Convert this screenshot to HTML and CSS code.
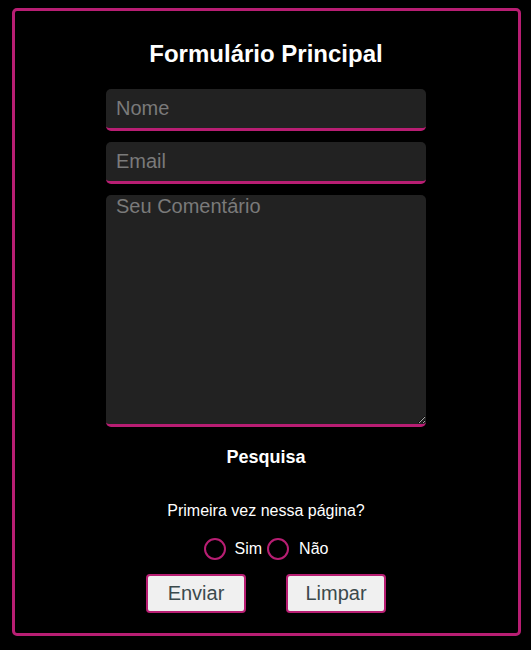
FILE: index.html
```html
<!DOCTYPE html>
<html lang="pt-BR">
<head>
    <meta charset="UTF-8">
    <meta name="viewport" content="width=device-width, initial-scale=1.0">
    <title>Formulário Principal</title>
    <link rel="stylesheet" href="styles.css">
</head>
<body>
    <form class="form-box" onsubmit="return false">
        <h1 class="title">Formulário Principal</h1>
        <input type="text" class="field" placeholder="Nome">
        <input type="email" class="field" placeholder="Email">
        <textarea class="field comment" placeholder="Seu Comentário"></textarea>
        <h2 class="subtitle">Pesquisa</h2>
        <p class="question">Primeira vez nessa página?</p>
        <div class="radio-row">
            <input type="radio" name="primeira" id="sim" class="radio">
            <label for="sim" class="radio-label">Sim</label>
            <input type="radio" name="primeira" id="nao" class="radio">
            <label for="nao" class="radio-label">Não</label>
        </div>
        <div class="button-row">
            <button type="submit" class="button">Enviar</button>
            <button type="reset" class="button">Limpar</button>
        </div>
    </form>
</body>
</html>
```

FILE: styles.css
```css
* {
    margin: 0;
    padding: 0;
    box-sizing: border-box;
}
html, body {
    background-color: #000;
}
body {
    padding: 8px 10px 0 12px;
    font-family: 'Liberation Sans', Arial, sans-serif;
    color: #fff;
}
.form-box {
    height: 628px;
    display: flex;
    flex-direction: column;
    align-items: center;
    padding: 29px 1px 20px 0;
    border: 3px solid #b81e73;
    border-radius: 5px;
}
.title {
    font-size: 24px;
    line-height: 28px;
    font-weight: bold;
}
.field {
    width: 320px;
    height: 42px;
    margin-top: 11px;
    padding: 0 10px;
    background: #222;
    border: none;
    border-bottom: 3px solid #b81e73;
    border-radius: 5px;
    color: #ddd;
    font-family: inherit;
    font-size: 20px;
    outline: none;
}
.title + .field {
    margin-top: 21px;
}
.field::placeholder {
    color: #7a7a7a;
}
.comment {
    height: 232px;
    padding: 0 10px;
    resize: both;
}
.subtitle {
    margin-top: 19px;
    font-size: 18px;
    line-height: 22px;
    font-weight: bold;
}
.question {
    margin-top: 34px;
    font-size: 16px;
    line-height: 18px;
}
.radio-row {
    display: flex;
    align-items: center;
    height: 22px;
    margin-top: 18px;
    font-size: 16px;
}
.radio {
    appearance: none;
    width: 22px;
    height: 22px;
    border: 2px solid #b81e73;
    border-radius: 50%;
    margin: 0;
}
.radio:checked {
    background: radial-gradient(#b81e73 40%, transparent 45%);
}
.radio-label {
    margin: 0 5px 0 9px;
}
.radio-label:last-child {
    margin: 0 0 0 10px;
}
.button-row {
    display: flex;
    gap: 40px;
    margin-top: 14px;
}
.button {
    width: 100px;
    height: 39px;
    background: #f0f0f0;
    border: 2px solid #b81e73;
    border-radius: 4px;
    color: #3b4a4c;
    font-family: inherit;
    font-size: 20px;
    cursor: pointer;
}
.button:hover {
    background: #e4e4e4;
}
```
